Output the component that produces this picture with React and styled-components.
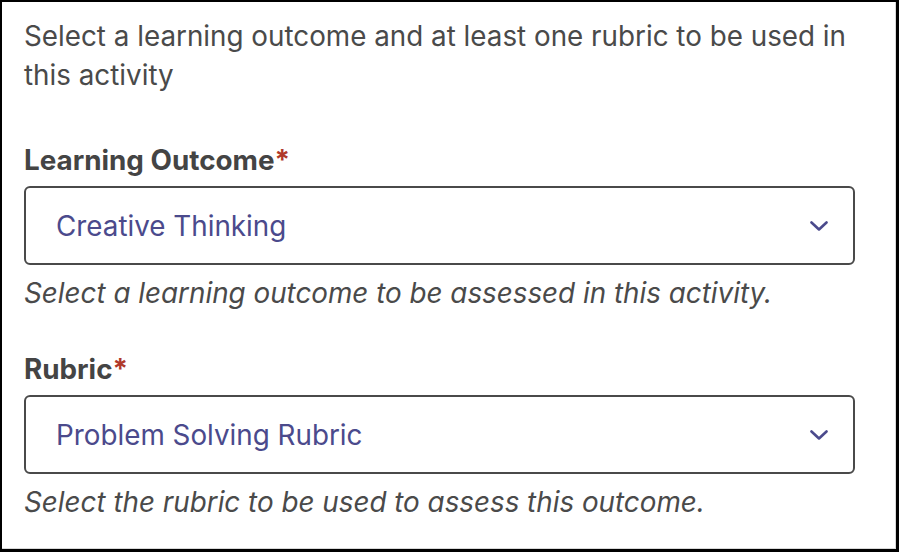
import React from "react";
import styled, { createGlobalStyle } from "styled-components";

const Global = createGlobalStyle`
  html, body { margin: 0; padding: 0; background: #fff; }
  body { font-family: Inter, "Noto Sans", sans-serif; }
`;

const Frame = styled.div`
  box-sizing: border-box;
  width: 899px;
  height: 552px;
  border: 2px solid #000;
  border-right-width: 3px;
  border-bottom-width: 3px;
  box-shadow: inset -1px -1px 0 #d8d8d8;
  padding: 15px 41px 0 22px;
  display: flex;
  flex-direction: column;
  color: #4a4a4a;
`;

const Intro = styled.p`
  margin: 0 0 46px;
  font-size: 27.8px;
  line-height: 39px;
  color: #4a4a4a;
`;

const Field = styled.div`
  display: flex;
  flex-direction: column;
  margin-bottom: ${(p) => p.$gap || 0}px;
`;

const Label = styled.label`
  font-size: 27.8px;
  font-weight: 700;
  line-height: 39px;
  color: #444;
  margin-bottom: 6px;
`;

const Star = styled.span`
  color: #b0392b;
`;

const Select = styled.div`
  box-sizing: border-box;
  height: 79px;
  border: 2px solid #4a4a4a;
  border-radius: 6px;
  display: flex;
  align-items: center;
  justify-content: space-between;
  padding: 0 25px 0 30px;
  font-size: 27.8px;
  color: #4b4a8c;
`;

const Help = styled.div`
  font-size: 27.8px;
  font-style: italic;
  line-height: 39px;
  color: #4a4a4a;
  margin-top: 9px;
`;

const Chevron = () => (
  <svg width="18" height="10" viewBox="0 0 18 10" fill="none">
    <path d="M1.5 1.5 L9 8.5 L16.5 1.5" stroke="#4b4a8c" strokeWidth="2.6" strokeLinecap="round" strokeLinejoin="round" />
  </svg>
);

export default function App() {
  return (
    <>
      <Global />
      <Frame>
        <Intro>Select a learning outcome and at least one rubric to be used in this activity</Intro>
        <Field $gap={37}>
          <Label>Learning Outcome<Star>*</Star></Label>
          <Select>
            <span>Creative Thinking</span>
            <Chevron />
          </Select>
          <Help>Select a learning outcome to be assessed in this activity.</Help>
        </Field>
        <Field>
          <Label>Rubric<Star>*</Star></Label>
          <Select>
            <span>Problem Solving Rubric</span>
            <Chevron />
          </Select>
          <Help>Select the rubric to be used to assess this outcome.</Help>
        </Field>
      </Frame>
    </>
  );
}
